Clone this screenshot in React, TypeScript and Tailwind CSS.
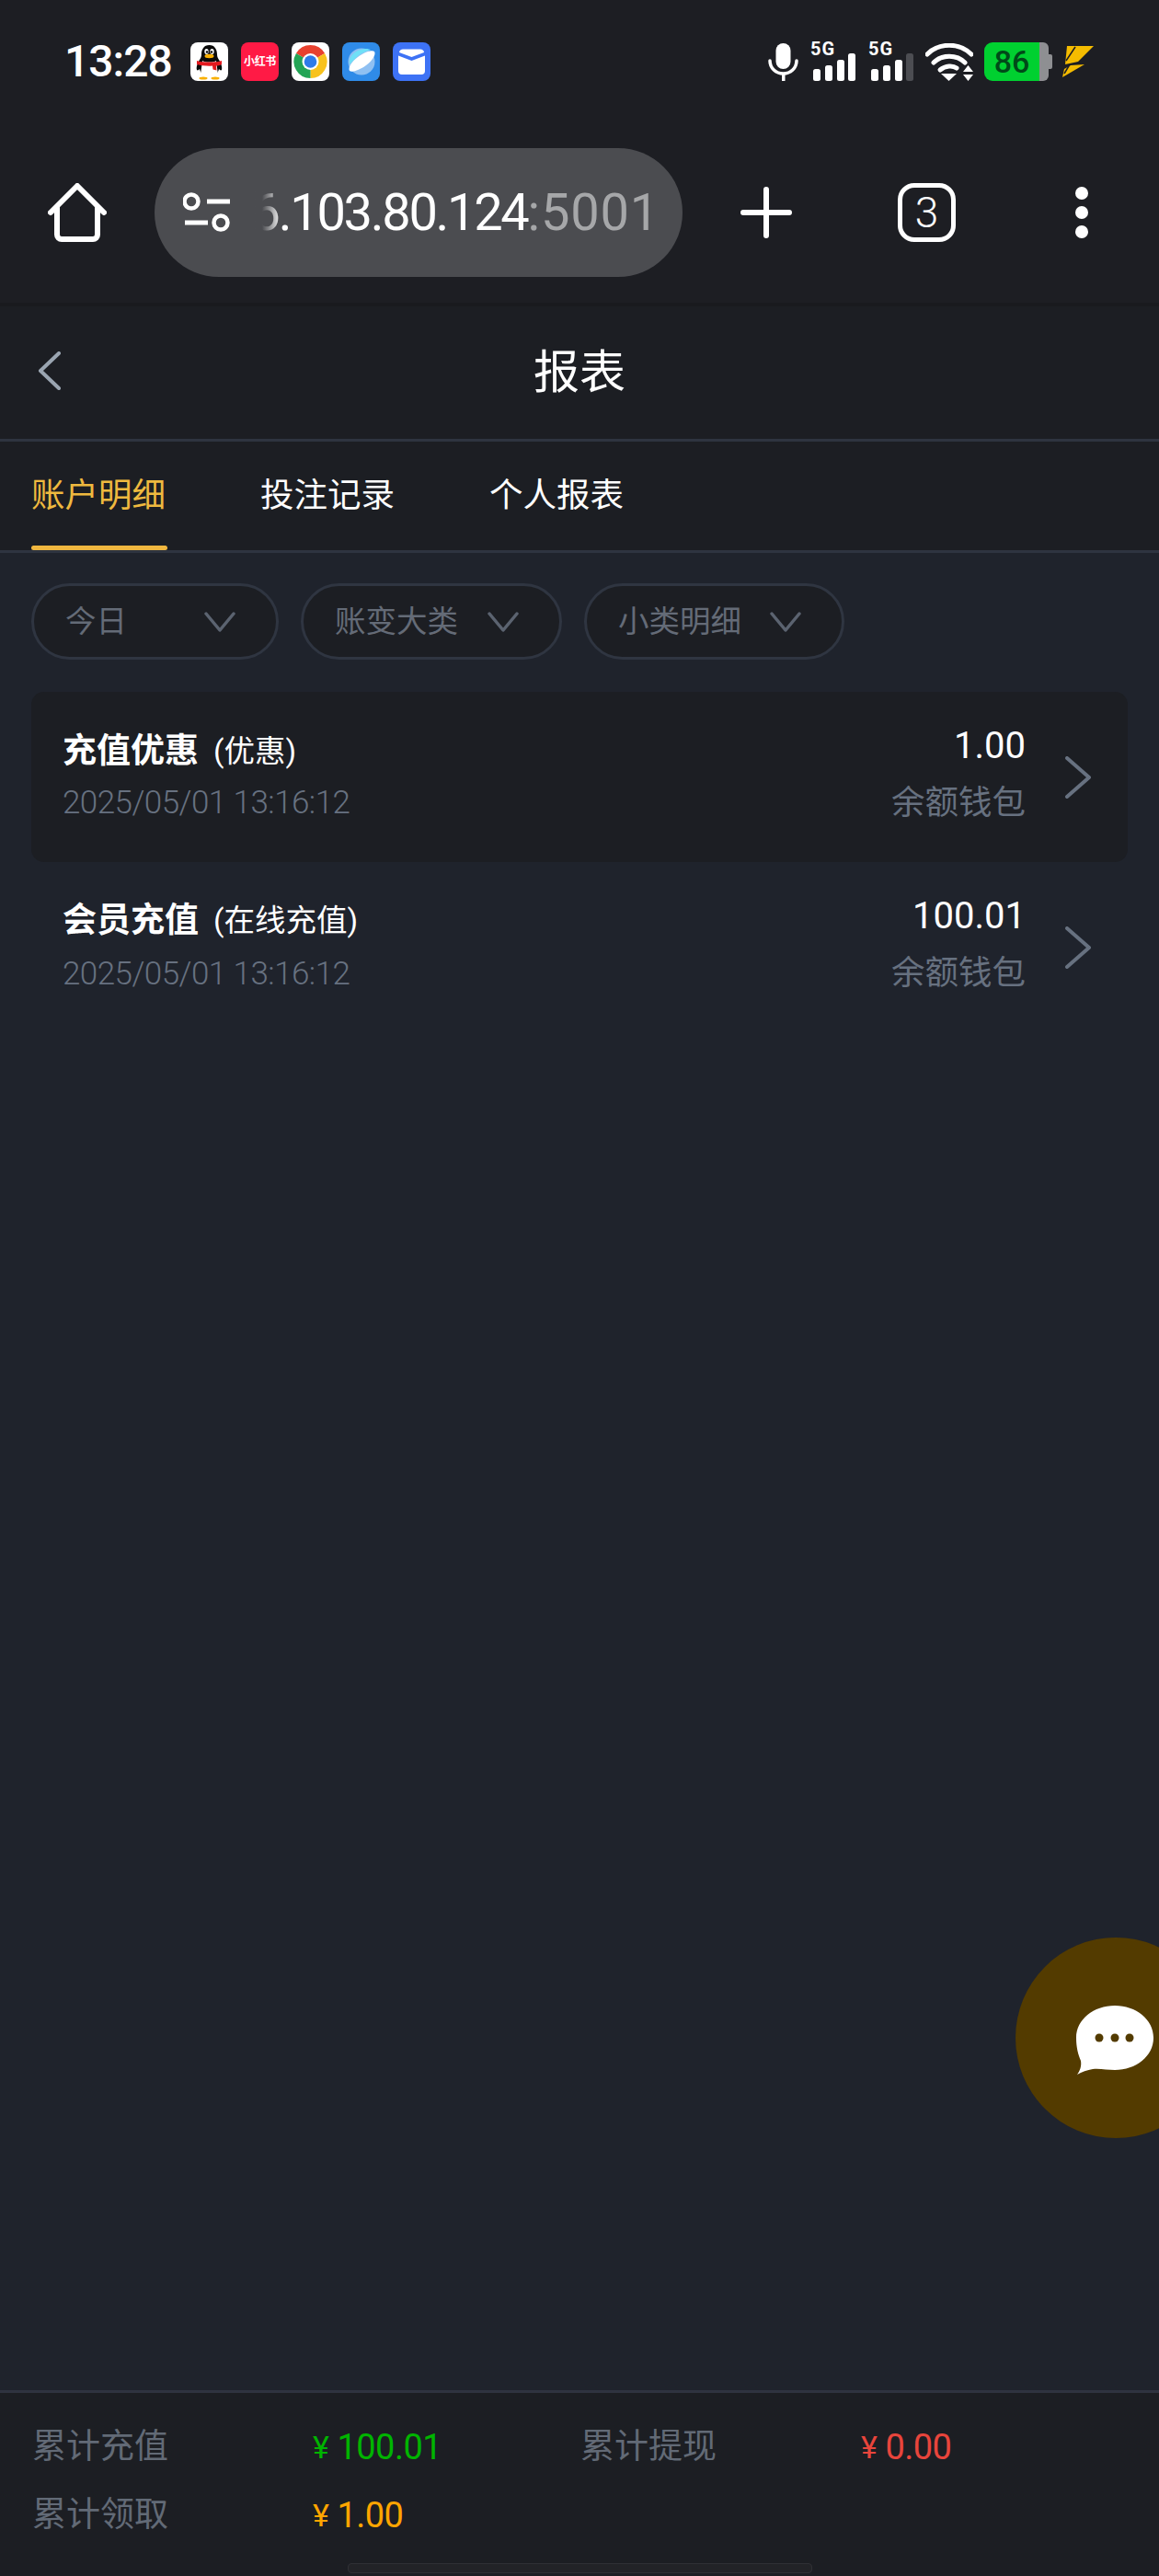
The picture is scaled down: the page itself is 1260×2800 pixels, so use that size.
import React from "react";

const font = { fontFamily: 'Roboto, "Noto Sans CJK SC", sans-serif' };

function Polar(cx: number, cy: number, r: number, deg: number) {
  const a = (deg * Math.PI) / 180;
  return `${(cx + r * Math.cos(a)).toFixed(2)} ${(cy + r * Math.sin(a)).toFixed(2)}`;
}

function QQIcon() {
  return (
    <svg width="41" height="42" viewBox="0 0 41 42" className="block">
      <rect width="41" height="42" rx="8" fill="#fff" />
      <path d="M20.5 3c-6 0-8.5 5-8.5 10 0 3-1 4-2 6-2 3-4 8-3 11 1 1 2 0 3-1 1 5 5 9 10.500 9s9.500-4 10.500-9c1 1 2 2 3 1 1-3-1-8-3-11-1-2-2-3-2-6 0-5-2.500-10-8.500-10z" fill="#0a0a0a" />
      <path d="M13 20c3 2 12 2 15 0l2 15c-2 3-6 4-9.500 4S13 38 11 35z" fill="#fff" />
      <ellipse cx="17.500" cy="10" rx="2.200" ry="3" fill="#fff" />
      <ellipse cx="23.500" cy="10" rx="2.200" ry="3" fill="#fff" />
      <circle cx="18" cy="10.500" r="1.200" fill="#000" />
      <circle cx="23" cy="10.500" r="1.200" fill="#000" />
      <ellipse cx="20.500" cy="15" rx="5" ry="2.200" fill="#f9b000" />
      <path d="M7 20c5 2 22 2 27 0v4c-2 1-4 1.500-6 1.500l.5 5-4-1-.5-4c-4 .5-12 0-17-1.500z" fill="#e3191e" />
      <ellipse cx="14" cy="39" rx="4.500" ry="1.500" fill="#f9b000" />
      <ellipse cx="27" cy="39" rx="4.500" ry="1.500" fill="#f9b000" />
    </svg>
  );
}

function ChromeIcon() {
  const c = 20.5;
  const d = 21;
  const R = 18;
  const sector = (a: number, b: number, fill: string) => (
    <path d={`M${c} ${d} L${Polar(c, d, R, a)} A${R} ${R} 0 0 1 ${Polar(c, d, R, b)} Z`} fill={fill} />
  );
  return (
    <svg width="41" height="42" viewBox="0 0 41 42" className="block">
      <rect width="41" height="42" rx="8" fill="#fff" />
      {sector(-150, -30, "#e8412f")}
      {sector(-30, 90, "#f8c21c")}
      {sector(90, 210, "#23a455")}
      <circle cx={c} cy={d} r="9" fill="#fff" />
      <circle cx={c} cy={d} r="6.800" fill="#2f7be8" />
    </svg>
  );
}

function PlanetIcon() {
  return (
    <svg width="41" height="42" viewBox="0 0 41 42" className="block">
      <rect width="41" height="42" rx="8" fill="#2f8be8" />
      <circle cx="21" cy="21" r="14.500" fill="#8fc0f2" />
      <path d="M8 24C6 16 15 7 26 7c2 0 4 .500 5 1.500C27 9 19 12 14 18c-2 2-4 4-6 6z" fill="#6fe0f7" />
      <path d="M8 31c-2-3 2-10 9-15s15-8 18-6c2 3-2 10-9 15s-15 8-18 6z" fill="#fff" />
    </svg>
  );
}

function MailIcon() {
  return (
    <svg width="41" height="42" viewBox="0 0 41 42" className="block">
      <rect width="41" height="42" rx="8" fill="#3d72f5" />
      <path d="M6 14.500 20.500 20 35 14.500V31a4 4 0 0 1-4 4H10a4 4 0 0 1-4-4z" fill="#fff" />
      <path d="M7 11c0-2 2-3.500 4-3.500h19c2 0 4 1.500 4 3.500L20.500 16z" fill="#fff" />
    </svg>
  );
}

function Signal({ dim }: { dim?: boolean }) {
  return (
    <div className="relative h-[42px] w-[49px]">
      <span className="absolute left-0 top-[-3px] text-[20px] font-bold leading-none tracking-[1px] text-white">5G</span>
      <svg width="49" height="42" viewBox="0 0 49 42" className="block">
        <rect x="3" y="29" width="8" height="13" rx="2.500" fill="#fff" />
        <rect x="16" y="25" width="8" height="17" rx="2.500" fill="#fff" />
        <rect x="29" y="19" width="8" height="23" rx="2.500" fill="#fff" />
        <rect x="41" y="12" width="8" height="30" rx="2.500" fill={dim ? "#4c4d52" : "#fff"} />
      </svg>
    </div>
  );
}

function Chevron({ className }: { className?: string }) {
  return (
    <svg width="34" height="22" viewBox="0 0 34 22" fill="none" className={className}>
      <path d="M2 2 17 20 32 2" stroke="#5b6370" strokeWidth="3.500" strokeLinecap="round" strokeLinejoin="round" />
    </svg>
  );
}

function Pill({ label, w }: { label: string; w: string }) {
  return (
    <div className={`flex h-[83px] items-center justify-between rounded-full border-[3px] border-[#2f3541] bg-[#1c1e23] pl-[34px] pr-[44px] ${w}`}>
      <span className="text-[33.500px] leading-none text-[#646b77]">{label}</span>
      <Chevron />
    </div>
  );
}

function Row({ title, sub, amount, date, active }: { title: string; sub: string; amount: string; date: string; active?: boolean }) {
  return (
    <div className={`mx-[34px] flex h-[185px] items-center rounded-[14px] pl-[34px] pr-[40px] ${active ? "bg-[#1c1e23]" : ""}`}>
      <div className={`flex-1 ${active ? "" : "pb-[2px] pt-[2px]"}`}>
        <div className="flex h-[44px] items-center">
          <span className="text-[37px] font-bold leading-none text-white">{title}</span>
          <span className="ml-[16px] text-[33.500px] leading-none text-white">{sub}</span>
        </div>
        <div className={`${active ? "mt-[12px]" : "mt-[14px]"} text-[35px] font-light leading-[44px] tracking-[-0.55px] text-[#677180]`}>{date}</div>
      </div>
      <div className="flex flex-col items-end pb-[7px]">
        <div className="text-[40px] leading-[46px] text-white">{amount}</div>
        <div className="mt-[17px] text-[36.500px] leading-[44px] text-[#677180]">余额钱包</div>
      </div>
      <svg width="28" height="46" viewBox="0 0 28 46" fill="none" className="ml-[43px] block">
        <path d="M2 2 26 23 2 44" stroke="#677180" strokeWidth="4" strokeLinecap="round" strokeLinejoin="round" />
      </svg>
    </div>
  );
}

function Money({ value, color }: { value: string; color: string }) {
  return (
    <div className={`flex items-center text-[38px] tracking-[-0.5px] ${color}`}>
      <span className="mr-[9px] text-[34px]">¥</span>
      <span>{value}</span>
    </div>
  );
}

export default function App() {
  return (
    <div style={font} className="relative flex h-[2800px] w-[1260px] flex-col overflow-hidden bg-[#1f232c] text-white">
      {/* browser chrome */}
      <div className="h-[329px] shrink-0 bg-[#1d1e23]">
        <div className="flex h-[134px] items-center justify-between pl-[70px] pr-[70px]">
          <div className="flex items-center">
            <span className="w-[137px] text-[48px] font-medium leading-none tracking-[-1px] text-white">13:28</span>
            <div className="flex gap-[14px]">
              <QQIcon />
              <div className="flex h-[42px] w-[41px] items-center justify-center whitespace-nowrap rounded-[8px] bg-[#ff1a45] text-[12px] font-bold leading-none tracking-[-0.3px] text-white">
                小红书
              </div>
              <ChromeIcon />
              <PlanetIcon />
              <MailIcon />
            </div>
          </div>
          <div className="flex items-center">
            <svg width="33" height="41" viewBox="0 0 33 41" fill="none" className="block">
              <rect x="8.500" y="0" width="16" height="28" rx="8" fill="#fff" />
              <path d="M2 19c0 8 6.500 14 14.500 14S31 27 31 19" stroke="#fff" strokeWidth="3.500" strokeLinecap="round" />
              <rect x="15" y="32" width="3.500" height="9" fill="#fff" />
            </svg>
            <div className="ml-[13px]"><Signal /></div>
            <div className="ml-[14px]"><Signal dim /></div>
            <svg width="52" height="41" viewBox="0 0 52 41" fill="none" className="ml-[13px] block">
              <path d="M2 12C15 -1 37 -1 50 12" stroke="#fff" strokeWidth="5" strokeLinecap="round" />
              <path d="M9 21c9-9 25-9 34 0" stroke="#fff" strokeWidth="5" strokeLinecap="round" />
              <path d="M16 29c6-5 14-5 18-2" stroke="#fff" strokeWidth="5" strokeLinecap="round" />
              <path d="M17 33h17l-8.500 8z" fill="#fff" />
              <path d="M41 31h11l-5.500-7zM41 34h11l-5.500 7z" fill="#fff" />
            </svg>
            <div className="relative ml-[12px] flex h-[42px] w-[74px]">
              <div className="flex h-[42px] w-[60px] items-center justify-center rounded-l-[9px] bg-[#00d030] text-[34px] font-medium leading-none text-[#004a18]">
                86
              </div>
              <div className="h-[42px] w-[10px] rounded-r-[6px] bg-[#8e8f92]" />
              <div className="mt-[13px] h-[16px] w-[4px] rounded-r-[2px] bg-[#8e8f92]" />
            </div>
            <svg width="35" height="35" viewBox="0 0 35 35" className="ml-[11px] block">
              <path d="M5 0H34L17 17 3 20z" fill="#f5bc00" />
              <path d="M9 21 24 20 0 34 2 25z" fill="#f5bc00" />
              <path d="M14 1 4 16M8 20 2 30" stroke="#1d1e23" strokeWidth="1.500" />
            </svg>
          </div>
        </div>

        <div className="mt-[27px] flex h-[140px] items-center pl-[52px]">
          <svg width="64" height="64" viewBox="0 0 64 64" fill="none" className="block shrink-0">
            <path d="M3 32 32 3l29 29" stroke="#fff" strokeWidth="6" strokeLinecap="round" strokeLinejoin="round" />
            <path d="M10 27v29a5 5 0 0 0 5 5h34a5 5 0 0 0 5-5V27" stroke="#fff" strokeWidth="6" strokeLinecap="round" />
          </svg>
          <div className="ml-[52px] flex h-[140px] w-[574px] shrink-0 items-center rounded-full bg-[#4b4c50]">
            <svg width="52" height="46" viewBox="0 0 52 46" fill="none" className="ml-[31px] block shrink-0">
              <circle cx="9" cy="11" r="7.500" stroke="#fff" strokeWidth="4.500" />
              <path d="M26 11h25M2 34h25" stroke="#fff" strokeWidth="5" />
              <circle cx="41" cy="34" r="7.500" stroke="#fff" strokeWidth="4.500" />
            </svg>
            <div className="relative ml-[25px] flex min-w-0 flex-1 justify-end overflow-hidden whitespace-nowrap pr-[25px] text-[56px] leading-none">
              <span className="tracking-[-2.300px] text-white">56.103.80.124</span>
              <span className="tracking-[0.8px] text-[#a6a7a9]">:5001</span>
              <div className="absolute inset-y-0 left-0 w-[30px] bg-gradient-to-r from-[#4b4c50] from-30% to-transparent" />
            </div>
          </div>
          <svg width="56" height="56" viewBox="0 0 56 56" fill="none" className="ml-[63px] block shrink-0">
            <path d="M28 3v50M3 28h50" stroke="#fff" strokeWidth="6" strokeLinecap="round" />
          </svg>
          <div className="ml-[115px] flex h-[64px] w-[63px] shrink-0 items-center justify-center rounded-[18px] border-[5px] border-white text-[46px] font-light leading-none text-white">
            3
          </div>
          <div className="ml-[130px] flex shrink-0 flex-col gap-[7px]">
            <div className="h-[14px] w-[14px] rounded-full bg-white" />
            <div className="h-[14px] w-[14px] rounded-full bg-white" />
            <div className="h-[14px] w-[14px] rounded-full bg-white" />
          </div>
        </div>
      </div>

      {/* page header */}
      <div className="h-[4px] shrink-0 bg-[#191a1e]" />
      <div className="relative flex h-[147px] shrink-0 items-center justify-center border-b-[3px] border-[#2e3440] bg-[#1c1e23]">
        <svg width="26" height="42" viewBox="0 0 26 42" fill="none" className="absolute left-[41px] top-[49px]">
          <path d="M23 2 3 21l20 19" stroke="#9aa5b1" strokeWidth="4" strokeLinecap="round" strokeLinejoin="round" />
        </svg>
        <span className="text-[50px] leading-none text-white">报表</span>
      </div>

      {/* tabs */}
      <div className="flex h-[121px] shrink-0 gap-[103px] border-b-[3px] border-[#2e3440] bg-[#1c1e23] pl-[34px] text-[36.500px] leading-none">
        <div className="relative flex h-[118px] w-[146px] items-center whitespace-nowrap text-[#efb93f]">
          账户明细
          <div className="absolute bottom-0 left-0 h-[5px] w-[148px] rounded-[3px] bg-[#f0b73f]" />
        </div>
        <div className="flex h-[118px] w-[146px] items-center whitespace-nowrap text-white">投注记录</div>
        <div className="flex h-[118px] w-[146px] items-center whitespace-nowrap text-white">个人报表</div>
      </div>

      {/* filters */}
      <div className="ml-[34px] mt-[33px] flex shrink-0 gap-[24px]">
        <Pill label="今日" w="w-[269px]" />
        <Pill label="账变大类" w="w-[284px]" />
        <Pill label="小类明细" w="w-[283px]" />
      </div>

      {/* list */}
      <div className="mt-[35px] flex flex-1 flex-col">
        <Row active title="充值优惠" sub="(优惠)" amount="1.00" date="2025/05/01 13:16:12" />
        <Row title="会员充值" sub="(在线充值)" amount="100.01" date="2025/05/01 13:16:12" />
      </div>

      {/* footer */}
      <div className="h-[202px] shrink-0 border-t-[3px] border-[#2f3340] bg-[#1c1e23]">
        <div className="grid grid-cols-[305px_291px_305px_1fr] pl-[35px] pt-[22px] text-[37px] leading-[74px] text-[#626a76]">
          <div>累计充值</div>
          <Money value="100.01" color="text-[#00b400]" />
          <div>累计提现</div>
          <Money value="0.00" color="text-[#e8453c]" />
          <div>累计领取</div>
          <Money value="1.00" color="text-[#ffa500]" />
        </div>
        <div className="mx-auto mt-[15px] h-[11px] w-[505px] rounded-[4px] border border-[#2f3035] bg-[#222327]" />
      </div>

      {/* floating chat button */}
      <div className="absolute left-[1104px] top-[2106px] flex h-[218px] w-[218px] items-center rounded-full bg-[#533b00] pl-[66px] pt-[4px]">
        <svg width="84" height="75" viewBox="0 0 84 75" className="block">
          <path d="M42 0c23 0 42 15 42 35S65 70 42 70c-8 0-17-2-24-1-6 1-12 3-17 6 3-4 5-9 4-15C2 53 0 45 0 35 0 15 19 0 42 0z" fill="#fff" />
          <circle cx="25" cy="35" r="4.500" fill="#533b00" />
          <circle cx="42" cy="35" r="4.500" fill="#533b00" />
          <circle cx="58" cy="35" r="4.500" fill="#533b00" />
        </svg>
      </div>
    </div>
  );
}
